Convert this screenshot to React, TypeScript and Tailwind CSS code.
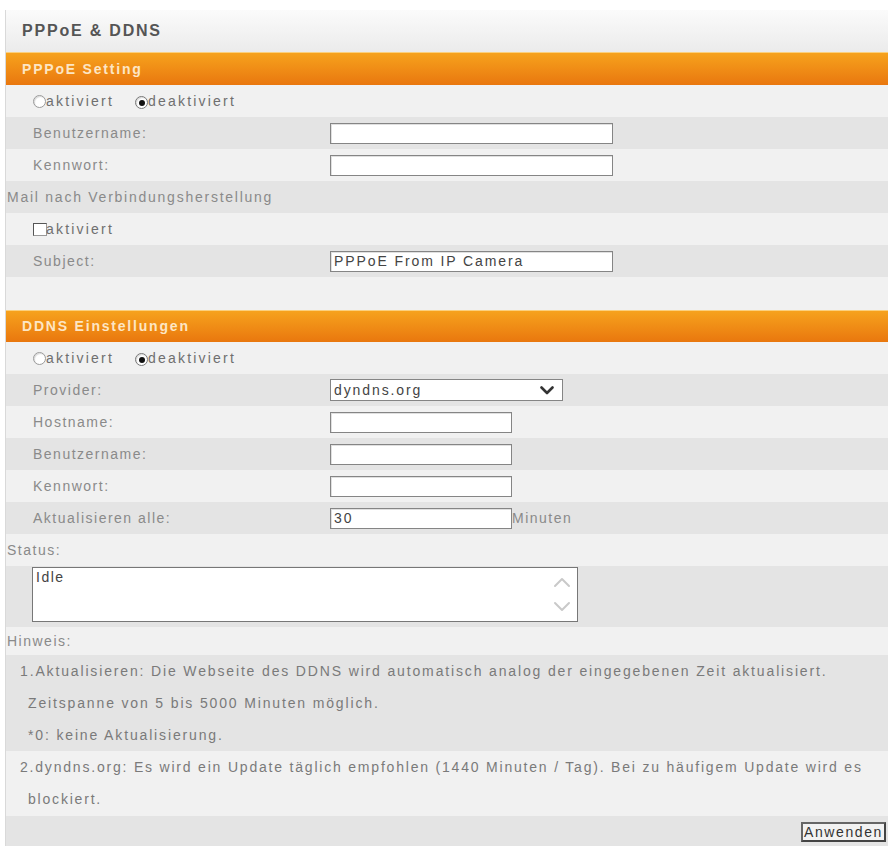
import React from 'react';

const font = "font-['Liberation_Sans',Arial,sans-serif]";

// alternating row backgrounds
const light = 'bg-[#f1f1f1]';
const dark = 'bg-[#e4e4e4]';

function SectionBar({ title, tall }: { title: string; tall?: boolean }) {
  return (
    <div
      className={`${tall ? 'h-[33px]' : 'h-[32px]'} flex items-center pl-[16px] border-t border-[#fbd07e] bg-linear-to-b from-[#f6a21d] to-[#e9770e]`}
    >
      <span className="text-[14px] font-bold tracking-[1.8px] text-[#fde6c4]">{title}</span>
    </div>
  );
}

function Radio({ checked }: { checked?: boolean }) {
  return (
    <span
      className={`relative inline-flex items-center justify-center w-[13px] h-[13px] rounded-full border ${checked ? 'border-[#777]' : 'border-[#9a9a9a]'} bg-white shadow-[inset_1px_1px_1px_rgba(0,0,0,0.15)]`}
    >
      {checked && <span className="w-[6px] h-[6px] rounded-full bg-[#111]" />}
    </span>
  );
}

function RadioRow() {
  return (
    <div className={`h-[32px] flex items-center pl-[27px] ${light} text-[14px] tracking-[2.2px] text-[#6f6f6f]`}>
      <Radio />
      <span>aktiviert</span>
      <span className="ml-[21px]">
        <Radio checked />
      </span>
      <span>deaktiviert</span>
    </div>
  );
}

function TextBox({ width, value }: { width: string; value?: string }) {
  return (
    <div
      className={`${width} h-[21px] border border-[#858585] bg-white flex items-center px-[3px] text-[14px] tracking-[1.9px] text-[#444] shadow-[inset_1px_1px_0_rgba(0,0,0,0.12)]`}
    >
      {value}
    </div>
  );
}

function FieldRow({
  label,
  bg,
  children,
}: {
  label: string;
  bg: string;
  children?: React.ReactNode;
}) {
  return (
    <div className={`h-[32px] flex items-center ${bg}`}>
      <div className="w-[324px] pl-[27px] text-[14px] tracking-[1.5px] text-[#8a8a8a]">{label}</div>
      {children}
    </div>
  );
}

export default function App() {
  return (
    <div className={`${font} bg-white min-h-[846px] pt-[10px] overflow-hidden`}>
      <div className="ml-[5px] w-[883px] border-l border-[#d9d9d9]">
        {/* Page title */}
        <div className="h-[42px] flex items-center pl-[16px] bg-linear-to-b from-[#fbfbfb] to-[#ebebeb]">
          <span className="text-[16px] font-bold tracking-[1.8px] text-[#555]">PPPoE &amp; DDNS</span>
        </div>

        {/* PPPoE */}
        <SectionBar title="PPPoE Setting" tall />
        <RadioRow />
        <FieldRow label="Benutzername:" bg={dark}>
          <TextBox width="w-[283px]" />
        </FieldRow>
        <FieldRow label="Kennwort:" bg={light}>
          <TextBox width="w-[283px]" />
        </FieldRow>
        <div className={`h-[32px] flex items-center pl-[1px] ${dark} text-[14px] tracking-[1.75px] text-[#8a8a8a]`}>
          Mail nach Verbindungsherstellung
        </div>
        <div className={`h-[32px] flex items-center pl-[27px] ${light} text-[14px] tracking-[2.2px] text-[#6f6f6f]`}>
          <span className="w-[14px] h-[13px] border border-[#555] border-r-[#999] border-b-[#999] bg-white" />
          <span className="-ml-[1px]">aktiviert</span>
        </div>
        <FieldRow label="Subject:" bg={dark}>
          <TextBox width="w-[283px]" value="PPPoE From IP Camera" />
        </FieldRow>
        <div className={`h-[33px] ${light}`} />

        {/* DDNS */}
        <SectionBar title="DDNS Einstellungen" />
        <RadioRow />
        <FieldRow label="Provider:" bg={dark}>
          <div className="w-[233px] h-[22px] border border-[#858585] bg-white flex items-center justify-between pl-[3px] pr-[8px] text-[14px] tracking-[1.9px] text-[#444]">
            <span>dyndns.org</span>
            <svg width="14" height="9" viewBox="0 0 14 9">
              <polyline points="1.5,1.5 7,7 12.5,1.5" fill="none" stroke="#333" strokeWidth="2.6" strokeLinecap="round" strokeLinejoin="round" />
            </svg>
          </div>
        </FieldRow>
        <FieldRow label="Hostname:" bg={light}>
          <TextBox width="w-[182px]" />
        </FieldRow>
        <FieldRow label="Benutzername:" bg={dark}>
          <TextBox width="w-[182px]" />
        </FieldRow>
        <FieldRow label="Kennwort:" bg={light}>
          <TextBox width="w-[182px]" />
        </FieldRow>
        <FieldRow label="Aktualisieren alle:" bg={dark}>
          <TextBox width="w-[182px]" value="30" />
          <span className="text-[14px] tracking-[1.5px] text-[#8a8a8a]">Minuten</span>
        </FieldRow>
        <div className={`h-[32px] flex items-center pl-[1px] ${light} text-[14px] tracking-[1.5px] text-[#8a8a8a]`}>
          Status:
        </div>
        <div className={`h-[61px] pt-[1px] pl-[26px] ${dark}`}>
          <div className="w-[546px] h-[55px] border border-[#777] bg-white flex justify-between">
            <span className="pl-[3px] pt-[2px] text-[14px] leading-[15px] tracking-[1.5px] text-[#444]">Idle</span>
            <div className="flex flex-col items-center justify-between py-[9px] pr-[6px]">
              <svg width="18" height="11" viewBox="0 0 18 11">
                <polyline points="2,9 9,2 16,9" fill="none" stroke="#c9c9c9" strokeWidth="2" strokeLinecap="round" strokeLinejoin="round" />
              </svg>
              <svg width="18" height="11" viewBox="0 0 18 11">
                <polyline points="2,2 9,9 16,2" fill="none" stroke="#c9c9c9" strokeWidth="2" strokeLinecap="round" strokeLinejoin="round" />
              </svg>
            </div>
          </div>
        </div>
        <div className={`h-[28px] flex items-center pl-[1px] ${light} text-[14px] tracking-[1.5px] text-[#8a8a8a]`}>
          Hinweis:
        </div>

        {/* Notes */}
        <div className={`${dark} text-[14px] leading-[32px] tracking-[1.85px] text-[#7a7a7a]`}>
          <div className="pl-[14px]">
            1.Aktualisieren: Die Webseite des DDNS wird automatisch analog der eingegebenen Zeit aktualisiert.
          </div>
          <div className="pl-[22px]">Zeitspanne von 5 bis 5000 Minuten möglich.</div>
          <div className="pl-[22px]">*0: keine Aktualisierung.</div>
        </div>
        <div className={`${light} h-[65px] text-[14px] leading-[32px] tracking-[1.8px] text-[#7a7a7a]`}>
          <div className="pl-[14px] whitespace-nowrap">
            2.dyndns.org: Es wird ein Update täglich empfohlen (1440 Minuten / Tag). Bei zu häufigem Update wird es
          </div>
          <div className="pl-[22px]">blockiert.</div>
        </div>
        <div className={`h-[34px] flex justify-end items-start pt-[6px] pr-[2px] ${dark}`}>
          <button className="h-[20px] px-[1px] border-2 border-[#666] border-r-[#444] border-b-[#444] bg-[#f2f2f2] text-[14px] leading-[14px] tracking-[1.6px] text-[#333]">
            Anwenden
          </button>
        </div>
      </div>
    </div>
  );
}
